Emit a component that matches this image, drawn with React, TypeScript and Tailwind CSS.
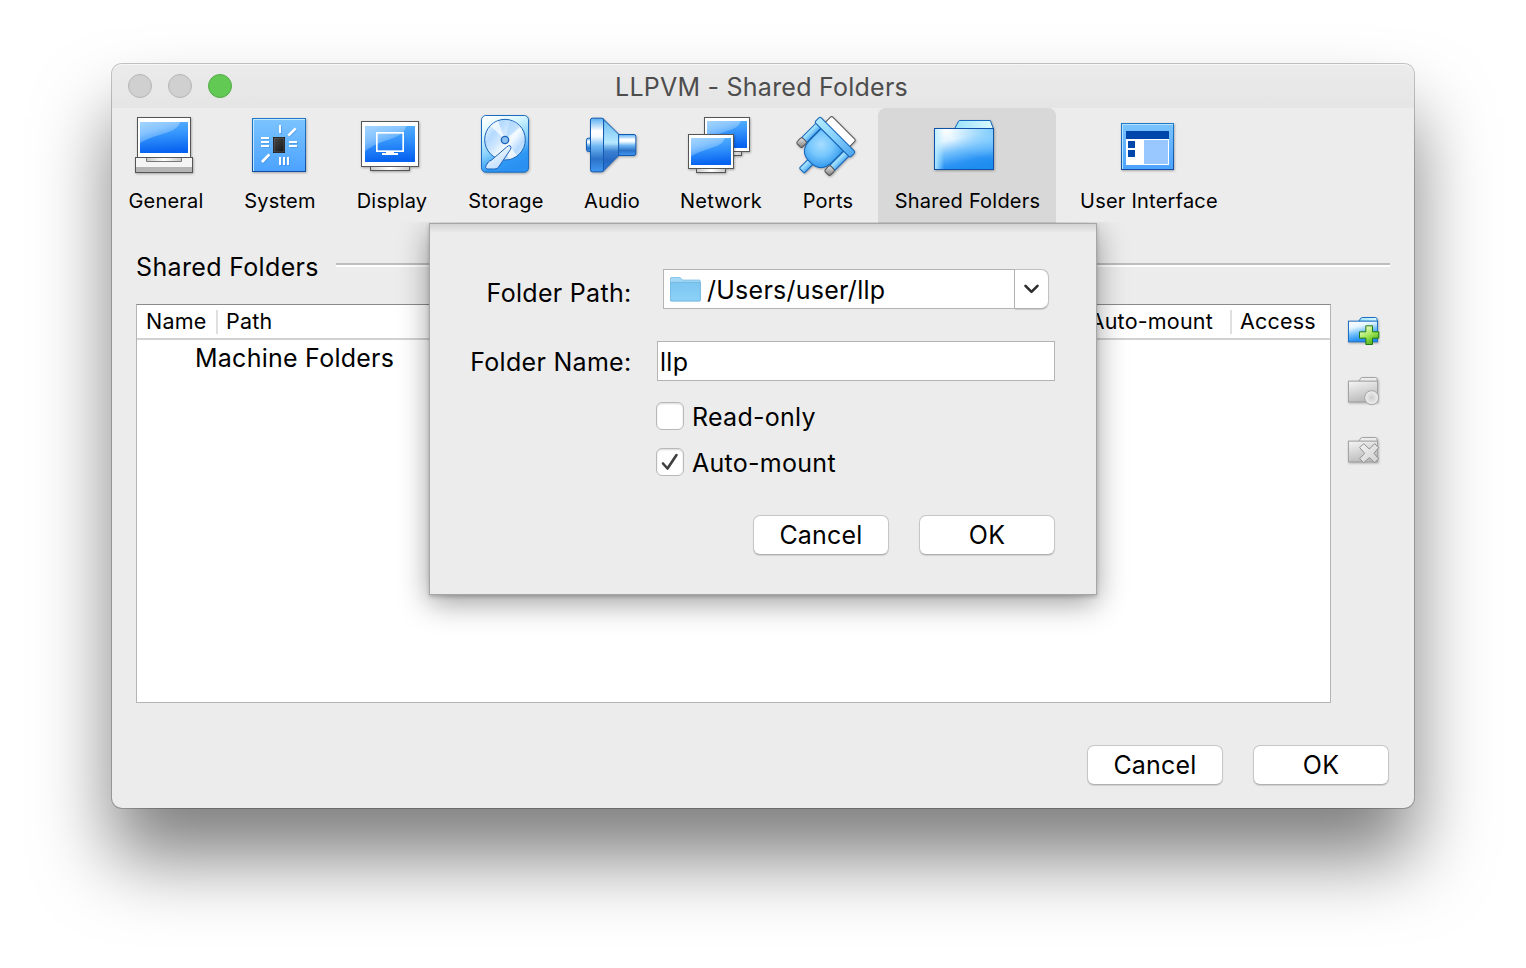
import React from "react";

const shadow = "drop-shadow(2px 3px 3px rgba(0,0,0,0.3))";

function Gradients() {
  return (
    <svg width="0" height="0" className="absolute">
      <defs>
        <linearGradient id="screen" x1="0" y1="0" x2="0.1" y2="1">
          <stop offset="0" stopColor="#58b2ff" />
          <stop offset="0.5" stopColor="#2f90fb" />
          <stop offset="1" stopColor="#0763f0" />
        </linearGradient>
        <linearGradient id="gloss" x1="0" y1="0" x2="0.6" y2="1">
          <stop offset="0" stopColor="#a4d4ff" />
          <stop offset="0.45" stopColor="#9ccfff" stopOpacity="0.75" />
          <stop offset="1" stopColor="#7dbefd" stopOpacity="0.15" />
        </linearGradient>
        <linearGradient id="metal" x1="0" y1="0" x2="1" y2="0">
          <stop offset="0" stopColor="#c8c8c8" />
          <stop offset="0.5" stopColor="#ffffff" />
          <stop offset="1" stopColor="#c8c8c8" />
        </linearGradient>
        <linearGradient id="tile" x1="0" y1="0" x2="0" y2="1">
          <stop offset="0" stopColor="#7cc4ff" />
          <stop offset="1" stopColor="#4ba2ff" />
        </linearGradient>
        <linearGradient id="tileEdge" x1="0" y1="0" x2="0" y2="1">
          <stop offset="0" stopColor="#1f7acb" />
          <stop offset="1" stopColor="#154ea0" />
        </linearGradient>
        <linearGradient id="chip" x1="0" y1="0" x2="1" y2="1">
          <stop offset="0" stopColor="#4a4a4a" />
          <stop offset="1" stopColor="#151515" />
        </linearGradient>
        <linearGradient id="disk" x1="0.1" y1="0" x2="0.5" y2="1">
          <stop offset="0" stopColor="#ffffff" />
          <stop offset="0.3" stopColor="#d6f6ff" />
          <stop offset="0.6" stopColor="#86d0fd" />
          <stop offset="0.85" stopColor="#2f98f4" />
          <stop offset="1" stopColor="#2a90f2" />
        </linearGradient>
        <linearGradient id="platter" x1="0" y1="0.1" x2="1" y2="0.9">
          <stop offset="0" stopColor="#f4faff" />
          <stop offset="0.25" stopColor="#b4daff" />
          <stop offset="0.42" stopColor="#cfe7ff" />
          <stop offset="0.6" stopColor="#f6fbff" />
          <stop offset="0.8" stopColor="#b6daff" />
          <stop offset="1" stopColor="#e4f2ff" />
        </linearGradient>
        <linearGradient id="arm" x1="0.2" y1="0" x2="0.8" y2="1">
          <stop offset="0" stopColor="#ffffff" />
          <stop offset="1" stopColor="#b4d8ff" />
        </linearGradient>
        <linearGradient id="cone" x1="0" y1="0" x2="0" y2="1">
          <stop offset="0" stopColor="#3f9be6" />
          <stop offset="0.25" stopColor="#7cc6f4" />
          <stop offset="0.45" stopColor="#b2e8ff" />
          <stop offset="0.62" stopColor="#3b80d2" />
          <stop offset="0.8" stopColor="#2568c4" />
          <stop offset="1" stopColor="#2f7cdc" />
        </linearGradient>
        <linearGradient id="tube" x1="0" y1="0" x2="0" y2="1">
          <stop offset="0" stopColor="#55aef2" />
          <stop offset="0.24" stopColor="#ffffff" />
          <stop offset="0.34" stopColor="#f4fbff" />
          <stop offset="0.52" stopColor="#6fb8f4" />
          <stop offset="0.76" stopColor="#2c72c8" />
          <stop offset="1" stopColor="#3f98f2" />
        </linearGradient>
        <radialGradient id="plug" cx="0.35" cy="0.35" r="0.8">
          <stop offset="0" stopColor="#a6dcff" />
          <stop offset="0.45" stopColor="#78c8fd" />
          <stop offset="1" stopColor="#2a92ea" />
        </radialGradient>
        <linearGradient id="plugBar" x1="0" y1="0" x2="1" y2="0">
          <stop offset="0" stopColor="#b2ecff" />
          <stop offset="0.5" stopColor="#86d0fd" />
          <stop offset="1" stopColor="#4fa8ee" />
        </linearGradient>
        <linearGradient id="screw" x1="0" y1="0" x2="1" y2="1">
          <stop offset="0" stopColor="#eeeeee" />
          <stop offset="1" stopColor="#777777" />
        </linearGradient>
        <linearGradient id="folder" x1="0.1" y1="0" x2="0.45" y2="1">
          <stop offset="0" stopColor="#ffffff" />
          <stop offset="0.3" stopColor="#e4f5ff" />
          <stop offset="0.58" stopColor="#72c0fc" />
          <stop offset="0.85" stopColor="#2c94f4" />
          <stop offset="1" stopColor="#1f8df0" />
        </linearGradient>
        <radialGradient id="folderGlow" cx="1" cy="0" r="0.75">
          <stop offset="0" stopColor="#7dccff" />
          <stop offset="1" stopColor="#7dccff" stopOpacity="0" />
        </radialGradient>
        <linearGradient id="folderLeft" x1="0" y1="0" x2="1" y2="0">
          <stop offset="0" stopColor="#b8eeff" stopOpacity="0.9" />
          <stop offset="0.16" stopColor="#b8eeff" stopOpacity="0" />
        </linearGradient>
        <linearGradient id="folderTab" x1="0" y1="0" x2="1" y2="0">
          <stop offset="0" stopColor="#9be2fb" />
          <stop offset="1" stopColor="#dcfbff" />
        </linearGradient>
        <linearGradient id="greyFolder" x1="0.1" y1="0" x2="0.45" y2="1">
          <stop offset="0" stopColor="#f4f4f4" />
          <stop offset="1" stopColor="#bababa" />
        </linearGradient>
        <linearGradient id="plus" x1="0.2" y1="0" x2="0.8" y2="1">
          <stop offset="0" stopColor="#f6ffdc" />
          <stop offset="0.5" stopColor="#a2e656" />
          <stop offset="1" stopColor="#3da40e" />
        </linearGradient>
        <radialGradient id="knob">
          <stop offset="0" stopColor="#cccccc" />
          <stop offset="1" stopColor="#f0f0f0" />
        </radialGradient>
        <linearGradient id="cross" x1="0" y1="0" x2="1" y2="1">
          <stop offset="0" stopColor="#f2f2f2" />
          <stop offset="1" stopColor="#d0d0d0" />
        </linearGradient>
        <linearGradient id="macFolder" x1="0" y1="0" x2="0" y2="1">
          <stop offset="0" stopColor="#7cc6f1" />
          <stop offset="1" stopColor="#8dd1f7" />
        </linearGradient>
      </defs>
    </svg>
  );
}

type IconProps = { box: string; w?: number; children: React.ReactNode };

function Icon({ box, w = 65, children }: IconProps) {
  return (
    <svg width={w} height={64} viewBox={box} className="shrink-0 overflow-visible">
      {children}
    </svg>
  );
}

function GeneralIcon() {
  return (
    <Icon box="87 171 195 192">
      <g style={{ filter: shadow }} stroke="#555" strokeWidth="3">
        <rect x="94.5" y="304.5" width="171" height="45" fill="#f4f4f4" />
        <rect x="96" y="333" width="168" height="15" fill="#b4b4b4" stroke="none" />
        <rect x="100.5" y="184.5" width="159" height="120" fill="#fff" />
        <path d="M127.5 306V316.5H232.5V306" fill="url(#metal)" stroke="#777" />
      </g>
      <rect x="108" y="198" width="144" height="93" fill="url(#screen)" />
      <path d="M108 198H228C218 236 160 228 108 262Z" fill="url(#gloss)" />
    </Icon>
  );
}

function SystemIcon() {
  return (
    <Icon box="429 171 195 192">
      <rect x="445.5" y="187.5" width="159" height="159" fill="url(#tile)" stroke="url(#tileEdge)" strokeWidth="3" style={{ filter: shadow }} />
      <path d="M448.5 345V190.5H603" fill="none" stroke="#bfe8ff" strokeWidth="3" />
      <g stroke="#2f7fd8" strokeWidth="6" opacity="0.4" transform="translate(3 3)">
        <path d="M528 207V231M471 246H495M471 258H495M471 270H495M555 258H579M555 270H579M528 303V327M540 303V327M552 303V327M553 239L575 217M474 318L496 295" />
      </g>
      <path d="M528 207V231M471 246H495M471 258H495M471 270H495M555 258H579M555 270H579M528 303V327M540 303V327M552 303V327" stroke="#fff" strokeWidth="6" />
      <path d="M553 239L575 217M474 318L496 295" stroke="#fff" strokeWidth="8" />
      <rect x="507" y="243" width="36" height="48" fill="#111" />
      <rect x="510" y="246" width="30" height="42" fill="url(#chip)" stroke="#666" strokeWidth="2" />
    </Icon>
  );
}

function DisplayIcon() {
  return (
    <Icon box="57 39 195 192">
      <g style={{ filter: shadow }} stroke="#555" strokeWidth="3">
        <rect x="91.5" y="199.5" width="117" height="12" fill="url(#metal)" />
        <rect x="64.5" y="64.5" width="171" height="135" fill="#fff" />
      </g>
      <rect x="75" y="78" width="150" height="108" fill="url(#screen)" />
      <path d="M75 78H198C190 122 130 110 75 154Z" fill="url(#gloss)" />
      <rect x="110.5" y="98.5" width="79" height="55" fill="none" stroke="#fff" strokeWidth="5" />
      <path d="M138 154H162V159H174V165H126V159H138Z" fill="#fff" />
    </Icon>
  );
}

function StorageIcon() {
  return (
    <Icon box="399 39 195 192">
      <rect x="424.5" y="46.5" width="141" height="170" rx="13" fill="url(#disk)" stroke="#1b6cc0" strokeWidth="3" style={{ filter: shadow }} />
      <circle cx="495" cy="119" r="61" fill="url(#platter)" stroke="#1c63b8" strokeWidth="3" />
      <path d="M495 119L452 78A60 60 0 0 1 474 63Z" fill="#fff" opacity="0.7" />
      <path d="M495 119L530 166A60 60 0 0 1 506 178Z" fill="#fff" opacity="0.7" />
      <path d="M495 119L510 61A60 60 0 0 1 541 80Z" fill="#9fcffb" opacity="0.5" />
      <circle cx="495" cy="120" r="11" fill="#8cc0ee" stroke="#1c63b8" strokeWidth="4" />
      <path d="M511 138Q515 142 511 149L476 201Q472 207 464 207H441Q434 203 438 197L445 186Q448 183 455 180L500 141Q507 134 511 138Z" fill="url(#arm)" stroke="#1b60b5" strokeWidth="3" />
    </Icon>
  );
}

function AudioIcon() {
  return (
    <Icon box="57 171 195 192">
      <g style={{ filter: shadow }} stroke="#1259b0" strokeWidth="3">
        <rect x="79.5" y="246.5" width="20" height="40" rx="6" fill="url(#tube)" />
        <path d="M129 188L177 235.5V298L129 346Z" fill="url(#cone)" />
        <path d="M176 235.5H222Q227.5 235.5 227.5 241V292Q227.5 298.5 222 298.5H176Z" fill="url(#tube)" />
        <path d="M97 186.500H125Q130.500 186.500 130.500 192V341Q130.500 347.500 125 347.500H97Q91.500 347.500 91.500 341V192Q91.500 186.500 97 186.500Z" fill="url(#tube)" />
      </g>
      <path d="M133 196L174 237V266H133Z" fill="#bcecff" opacity="0.35" />
    </Icon>
  );
}

function NetworkIcon() {
  return (
    <Icon box="384 171 195 192">
      <g style={{ filter: shadow }} stroke="#555" strokeWidth="3">
        <rect x="457.5" y="286.5" width="87" height="12" fill="url(#metal)" />
        <rect x="433.5" y="184.5" width="135" height="102" fill="#fff" />
      </g>
      <rect x="441" y="195" width="120" height="81" fill="url(#screen)" />
      <path d="M441 195H542C534 226 490 222 441 250Z" fill="url(#gloss)" />
      <g style={{ filter: shadow }} stroke="#555" strokeWidth="3">
        <rect x="409.5" y="337.5" width="87" height="12" fill="url(#metal)" />
        <rect x="385.5" y="235.5" width="135" height="102" fill="#fff" />
      </g>
      <rect x="393" y="246" width="120" height="81" fill="url(#screen)" />
      <path d="M393 246H494C486 277 442 273 393 301Z" fill="url(#gloss)" />
    </Icon>
  );
}

function PortsIcon() {
  return (
    <Icon box="75 39 195 192">
      <g style={{ filter: shadow }}>
        <g transform="translate(195.5 111) rotate(45)" strokeWidth="3" stroke="#1464b8">
          <rect x="-52" y="-37" width="103" height="40" rx="5" fill="#fff" stroke="#555" />
          <rect x="-70" y="10" width="21" height="62" fill="url(#plugBar)" />
          <rect x="49" y="10" width="21" height="62" fill="url(#plugBar)" />
          <rect x="-71" y="71" width="23" height="24" rx="6" fill="url(#screw)" stroke="#555" />
          <rect x="48" y="71" width="23" height="24" rx="6" fill="url(#screw)" stroke="#555" />
          <rect x="-10" y="102" width="21" height="40" rx="3" fill="url(#plugBar)" />
          <path d="M-47 12H47V60Q47 107 0 107Q-47 107 -47 60Z" fill="url(#plug)" />
          <rect x="-75" y="-11" width="150" height="23" rx="5" fill="url(#plugBar)" />
        </g>
      </g>
    </Icon>
  );
}

function SharedFoldersIcon() {
  return (
    <Icon box="492 39 198 192" w={66}>
      <g style={{ filter: shadow }} strokeWidth="3" stroke="#1767bf">
        <path d="M554 86L566 63Q567 61.500 570 61.500H661L670 86Z" fill="url(#folderTab)" />
        <rect x="493.5" y="85.5" width="177" height="123" fill="url(#folder)" stroke="#0f52a8" />
      </g>
      <rect x="495" y="87" width="174" height="120" fill="url(#folderGlow)" />
      <rect x="495" y="87" width="174" height="120" fill="url(#folderLeft)" />
    </Icon>
  );
}

function UserInterfaceIcon() {
  return (
    <Icon box="168 39 195 192">
      <rect x="184.5" y="70.5" width="156" height="138" fill="url(#tile)" stroke="url(#tileEdge)" strokeWidth="3" style={{ filter: shadow }} />
      <path d="M187.5 207V73.5H339" fill="none" stroke="#b5e2ff" strokeWidth="3" />
      <rect x="198" y="93" width="129" height="102" fill="#fff" />
      <rect x="198" y="93" width="129" height="24" fill="#0047ab" />
      <rect x="204" y="123" width="21" height="21" fill="#0047ab" />
      <rect x="204" y="150" width="21" height="21" fill="#0047ab" />
      <rect x="252" y="120" width="72" height="72" fill="#99c7ff" />
    </Icon>
  );
}

function SideFolder({ grey, children }: { grey?: boolean; children: React.ReactNode }) {
  return (
    <svg width="36" height="32" viewBox="828 315 108 96" className="overflow-visible">
      <g style={{ filter: shadow }} strokeWidth="3" stroke={grey ? "#a3a3a3" : "#1c6fc4"}>
        <path d="M866 334L873 324Q874 322.500 877 322.500H917Q919 322.500 920 325L922.500 334Z" fill={grey ? "#ececec" : "url(#folderTab)"} />
        <rect x="835.5" y="333.5" width="87" height="62" fill={grey ? "url(#greyFolder)" : "url(#folder)"} />
      </g>
      {children}
    </svg>
  );
}

const tools = [
  { label: "General", width: "w-[107px]", icon: <GeneralIcon /> },
  { label: "System", width: "w-[103px]", icon: <SystemIcon /> },
  { label: "Display", width: "w-[103px]", icon: <DisplayIcon /> },
  { label: "Storage", width: "w-[107px]", icon: <StorageIcon /> },
  { label: "Audio", width: "w-[87px]", icon: <AudioIcon /> },
  { label: "Network", width: "w-[113px]", icon: <NetworkIcon /> },
  { label: "Ports", width: "w-[83px]", icon: <PortsIcon /> },
  { label: "Shared Folders", width: "w-[178px]", icon: <SharedFoldersIcon />, active: true },
  { label: "User Interface", width: "w-[167px]", icon: <UserInterfaceIcon /> },
];

function PushButton({ children }: { children: React.ReactNode }) {
  return (
    <button className="flex h-10 w-[136px] items-center justify-center rounded-[7px] border border-[#c6c6c6] border-b-[#b0b0b0] bg-white pt-0.5 text-[25px] tracking-[0.2px] shadow-[0_1px_1px_rgba(0,0,0,0.12)]">
      {children}
    </button>
  );
}

function Checkbox({ label, checked }: { label: string; checked?: boolean }) {
  return (
    <label className="ml-[226px] flex h-7 items-center">
      <span className="flex h-7 w-7 items-center justify-center rounded-[6px] border border-[#b8b8b8] bg-white shadow-[inset_0_1px_2px_rgba(0,0,0,0.15)]">
        {checked && (
          <svg width="18" height="18" viewBox="0 0 18 18" fill="none" stroke="#3f3f3f" strokeWidth="2.6" strokeLinecap="round" strokeLinejoin="round">
            <path d="M2 10.500L6.500 15.500L15.500 2" />
          </svg>
        )}
      </span>
      <span className="ml-2 pt-0.5 text-[25px] leading-7 tracking-[0.28px]">{label}</span>
    </label>
  );
}

function ShareSheet() {
  return (
    <div className="absolute top-[159px] left-[317px] h-[372px] w-[668px] border border-[#a6a6a6] bg-[#ececec] shadow-[0_8px_28px_rgba(0,0,0,0.38),0_2px_4px_rgba(0,0,0,0.2)] [clip-path:inset(-1px_-60px_-60px_-60px)]">
      <div className="h-[9px] bg-linear-to-b from-[#d3d3d3] to-[#ececec]" />
      <div className="mt-9 flex h-10 items-center">
        <span className="w-[201.5px] pt-[9px] text-right text-[25px] tracking-[0.3px] whitespace-nowrap">Folder Path:</span>
        <div className="ml-[31.5px] flex h-10 w-[352px] items-center border border-[#b4b4b4] bg-white pl-1.5">
          <svg width="31" height="26" viewBox="0 0 93 78" className="mt-0.5 shrink-0">
            <path d="M1 6Q1 1 6 1H28Q31 1 33 4L37 9H87Q91 9 91 13V69Q91 72 88 72H4Q1 72 1 69Z" fill="#a3d8f6" stroke="#6db4de" strokeWidth="2" />
            <path d="M1 16H91V69Q91 72 88 72H4Q1 72 1 69Z" fill="url(#macFolder)" stroke="#6bb1dc" strokeWidth="2" />
          </svg>
          <span className="ml-1.5 pt-[3px] text-[25px] tracking-[0.25px]">/Users/user/llp</span>
        </div>
        <div className="flex h-10 w-[34px] items-center justify-center rounded-r-[8px] border border-l-0 border-[#c2c2c2] border-b-[#b0b0b0] bg-white shadow-[0_1px_1px_rgba(0,0,0,0.15)]">
          <svg width="16" height="10" viewBox="0 0 16 10" fill="none" stroke="#2e2e2e" strokeWidth="2.6" strokeLinecap="round" strokeLinejoin="round">
            <path d="M1.500 1.800L7.500 7.800L13.500 1.800" />
          </svg>
        </div>
      </div>
      <div className="mt-8 flex h-10 items-center">
        <span className="w-[201.5px] pt-1 text-right text-[25px] tracking-[0.3px] whitespace-nowrap">Folder Name:</span>
        <div className="ml-[25.5px] flex h-10 w-[398px] items-center border border-[#b4b4b4] bg-white pt-1 pl-0.5 text-[25px] tracking-[0.3px]">llp</div>
      </div>
      <div className="mt-[21px] flex flex-col gap-[18px]">
        <Checkbox label="Read-only" />
        <Checkbox label="Auto-mount" checked />
      </div>
      <div className="mt-[39px] mr-[41px] flex justify-end gap-[30px]">
        <PushButton>Cancel</PushButton>
        <PushButton>OK</PushButton>
      </div>
    </div>
  );
}

export default function App() {
  return (
    <div className="h-[968px] w-[1526px] overflow-hidden bg-white px-[112px] pt-16 font-['Inter',sans-serif] font-[430] text-black">
      <Gradients />
      <div className="relative h-[744px] w-[1302px] rounded-[10px] bg-[#ececec] shadow-[0_0_0_1px_rgba(0,0,0,0.22),0_50px_75px_rgba(0,0,0,0.5)]">
        <header className="flex h-11 items-center rounded-t-[10px] border-t border-[#f6f6f6] bg-linear-to-b from-[#ebebeb] to-[#e5e5e5] pl-4">
          <div className="-mt-0.5 flex gap-4">
            <span className="h-6 w-6 rounded-full border border-[#b5b5b5] bg-[#d0d0d0]" />
            <span className="h-6 w-6 rounded-full border border-[#b5b5b5] bg-[#d0d0d0]" />
            <span className="h-6 w-6 rounded-full border border-[#52ac44] bg-[#62c954]" />
          </div>
          <h1 className="mr-[123px] flex-1 pt-0.5 text-center text-[25px] tracking-[0.24px] text-[#4d4d4d]">LLPVM - Shared Folders</h1>
        </header>

        <nav className="flex h-[115px] gap-[9px]">
          {tools.map((t) => (
            <div
              key={t.label}
              className={`${t.width} flex shrink-0 flex-col items-center pt-[5px] ${t.active ? "rounded-t-[8px] bg-[#d8d8d8]" : ""}`}
            >
              {t.icon}
              <span className="mt-[10px] pl-px text-[20px] leading-7 tracking-[0.22px] whitespace-nowrap">{t.label}</span>
            </div>
          ))}
        </nav>

        <div className="flex h-[81px] items-start pt-[27px] pr-6 pl-6">
          <h2 className="w-[200px] pt-px text-[25px] leading-8 tracking-[0.34px] whitespace-nowrap">Shared Folders</h2>
          <div className="mt-[13px] h-1 flex-1 border-t-2 border-[#bdbdbd] bg-white" />
        </div>

        <div className="flex pl-6">
          <div className="h-[399px] w-[1195px] border border-[#b5b5b5] border-t-[#8a8a8a] bg-white">
            <div className="flex h-[35px] items-center border-b-2 border-[#d2d2d2] text-[21.5px] tracking-[0.2px]">
              <div className="flex h-6 w-[81px] items-center border-r-2 border-[#e0e0e0] pl-[9px]">Name</div>
              <div className="flex h-6 w-[860px] items-center pl-2">Path</div>
              <div className="flex h-6 w-[154px] items-center justify-end border-r-2 border-[#e0e0e0] pr-[17px] whitespace-nowrap">Auto-mount</div>
              <div className="flex h-6 items-center pl-2">Access</div>
            </div>
            <div className="pt-0.5 pl-[58px] text-[25px] leading-8 tracking-[0.25px]">Machine Folders</div>
          </div>
          <div className="ml-[15px] flex flex-col gap-7 pt-[11px]">
            <SideFolder>
              <path d="M887.500 347.500H907.500V365.500H926.500V384.500H907.500V403.500H887.500V384.500H868.500V365.500H887.500Z" fill="url(#plus)" stroke="#1f7a12" strokeWidth="3" />
            </SideFolder>
            <SideFolder grey>
              <circle cx="905" cy="383" r="21" fill="url(#knob)" stroke="#a3a3a3" strokeWidth="3" />
            </SideFolder>
            <SideFolder grey>
              <path d="M881 341L898 357L914 341L926 353L912 370L926 386L914 398L898 383L881 398L869 386L884 370L869 353Z" fill="url(#cross)" stroke="#8f8f8f" strokeWidth="3" strokeLinejoin="round" />
            </SideFolder>
          </div>
        </div>

        <footer className="mt-[42px] mr-[25px] flex justify-end gap-[30px]">
          <PushButton>Cancel</PushButton>
          <PushButton>OK</PushButton>
        </footer>

        <ShareSheet />
      </div>
    </div>
  );
}
